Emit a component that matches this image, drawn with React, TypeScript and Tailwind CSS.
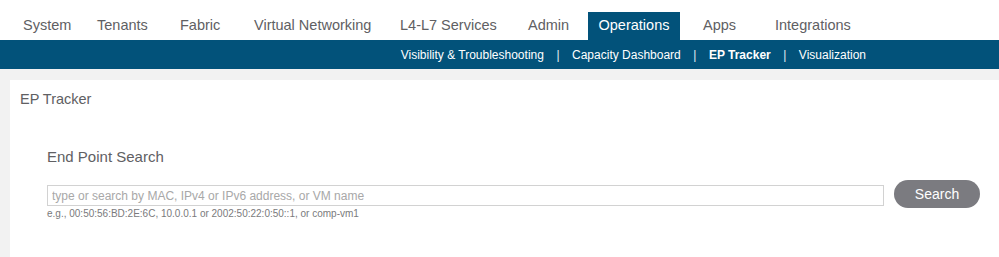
import React from "react"

const tabs = [
  { label: "System", cls: "w-[74px] pl-[10px]" },
  { label: "Tenants", cls: "w-[83px] pl-[10px]" },
  { label: "Fabric", cls: "w-[74px] pl-[10px]" },
  { label: "Virtual Networking", cls: "w-[146px] pl-[10px]" },
  { label: "L4-L7 Services", cls: "w-[128px] pl-[10px]" },
  { label: "Admin", cls: "w-[70px] pl-[10px]" },
  { label: "Operations", cls: "w-[92px] justify-center bg-[#02527a] text-white", active: true },
  { label: "Apps", cls: "w-[85px] pl-[23px]" },
  { label: "Integrations", cls: "w-[100px] pl-[10px]" },
]

const subLinks = ["Visibility & Troubleshooting", "Capacity Dashboard", "EP Tracker", "Visualization"]

export default function App() {
  return (
    <div className="w-full h-[257px] flex flex-col bg-[#f2f2f2] font-['Liberation_Sans',Arial,sans-serif] overflow-hidden">
      {/* Top tabs */}
      <header className="h-[40px] shrink-0 bg-white flex items-end pl-[13px]">
        {tabs.map((t) => (
          <div
            key={t.label}
            className={`h-[28px] flex items-center text-[14.5px] whitespace-nowrap ${
              t.active ? "" : "text-[#606063]"
            } ${t.cls}`}
          >
            {t.label}
          </div>
        ))}
      </header>

      {/* Sub navigation */}
      <nav className="h-[29px] shrink-0 bg-[#02527a] flex items-center justify-end pr-[133px] text-[12px] text-white gap-[12.5px]">
        {subLinks.map((l, i) => (
          <React.Fragment key={l}>
            {i > 0 && <span className="text-[#e5edf2]">|</span>}
            <span className={l === "EP Tracker" ? "font-bold" : ""}>{l}</span>
          </React.Fragment>
        ))}
      </nav>

      {/* Content */}
      <main className="flex-1 pt-[11px] pl-[10px]">
        <section className="bg-white h-full pl-[10px] pr-[19px] pt-[11px]">
          <h1 className="text-[14.5px] text-[#606063] leading-[17px]">EP Tracker</h1>

          <div className="pl-[27px] pt-[40px]">
            <h2 className="text-[15px] text-[#606063] leading-[18px]">End Point Search</h2>

            <div className="flex items-start gap-[10px] mt-[14px]">
              <div className="flex-1">
                <input
                  type="text"
                  placeholder="type or search by MAC, IPv4 or IPv6 address, or VM name"
                  className="w-full h-[21px] mt-[5px] border border-[#d2d2d2] px-[4px] text-[12px] text-[#333] placeholder:text-[#a8a8a8] outline-none"
                />
                <div className="text-[10px] text-[#7a7a7c] leading-[12px] mt-[1px]">
                  e.g., 00:50:56:BD:2E:6C, 10.0.0.1 or 2002:50:22:0:50::1, or comp-vm1
                </div>
              </div>
              <button className="w-[86px] h-[28px] rounded-full bg-[#7b7b80] text-white text-[14px]">
                Search
              </button>
            </div>
          </div>
        </section>
      </main>
    </div>
  )
}
